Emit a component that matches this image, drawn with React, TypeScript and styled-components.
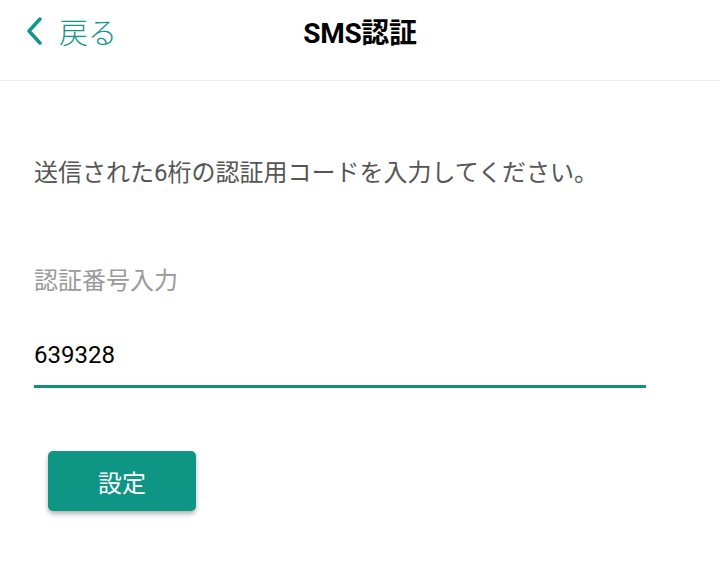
import React, { useState } from "react";
import styled, { createGlobalStyle } from "styled-components";

const GlobalStyle = createGlobalStyle`
	html, body {
		margin: 0;
		padding: 0;
		background: #ffffff;
		font-family: Roboto, "Noto Sans CJK JP", sans-serif;
	}
`;

const Page = styled.div`
	width: 720px;
	min-height: 565px;
	background: #ffffff;
`;

const Header = styled.header`
	height: 80px;
	display: grid;
	grid-template-columns: 1fr auto 1fr;
	align-items: center;
	border-bottom: 1px solid #ececec;
	box-sizing: content-box;
`;

const BackButton = styled.button`
	justify-self: start;
	display: flex;
	align-items: center;
	gap: 15px;
	margin-left: 24px;
	margin-top: -18px;
	padding: 0;
	border: none;
	background: none;
	color: #13968a;
	font-family: Roboto, "Noto Sans CJK JP", sans-serif;
	font-size: 29px;
	font-weight: 300;
	cursor: pointer;
`;

const Title = styled.h1`
	margin: -19px 0 0;
	font-size: 28px;
	font-weight: 700;
	letter-spacing: -0.3px;
	color: #000000;
	font-family: Roboto, "Noto Sans CJK JP", sans-serif;
`;

const Content = styled.main`
	padding: 75px 34px 0;
`;

const Message = styled.p`
	margin: 0;
	font-size: 24px;
	line-height: 34px;
	color: #555555;
`;

const Field = styled.div`
	margin-top: 74px;
	width: 612px;
	display: flex;
	flex-direction: column;
`;

const Label = styled.label`
	font-size: 24px;
	line-height: 34px;
	color: #9a9a9a;
`;

const InputRow = styled.div`
	margin-top: 40px;
	display: flex;
	border-bottom: 3px solid #10907f;
`;

const Input = styled.input`
	flex: 1;
	padding: 0 0 13px;
	border: none;
	outline: none;
	font-family: Roboto, "Noto Sans CJK JP", sans-serif;
	font-size: 24px;
	line-height: 34px;
	color: #000000;
	caret-color: #10907f;
	background: transparent;
`;

const SubmitButton = styled.button`
	margin: 63px 0 0 14px;
	width: 148px;
	height: 60px;
	border: none;
	border-radius: 5px;
	background: #0f9584;
	color: #ffffff;
	font-family: Roboto, "Noto Sans CJK JP", sans-serif;
	font-size: 24px;
	box-shadow: 0 3px 5px rgba(0, 0, 0, 0.3);
	cursor: pointer;
`;

const ChevronLeft = () => (
	<svg width="20" height="28" viewBox="0 0 20 28" fill="none">
		<path d="M16 2 L5 14 L16 26" stroke="currentColor" strokeWidth="3.5" strokeLinecap="round" strokeLinejoin="round" />
	</svg>
);

const App = () => {
	const [code, setCode] = useState("639328");

	return (
		<Page>
			<GlobalStyle />
			<Header>
				<BackButton>
					<ChevronLeft />
					戻る
				</BackButton>
				<Title>SMS認証</Title>
				<div />
			</Header>
			<Content>
				<Message>送信された6桁の認証用コードを入力してください。</Message>
				<Field>
					<Label htmlFor="code">認証番号入力</Label>
					<InputRow>
						<Input id="code" value={code} onChange={(e) => setCode(e.target.value)} autoFocus />
					</InputRow>
				</Field>
				<SubmitButton>設定</SubmitButton>
			</Content>
		</Page>
	);
};

export default App;
